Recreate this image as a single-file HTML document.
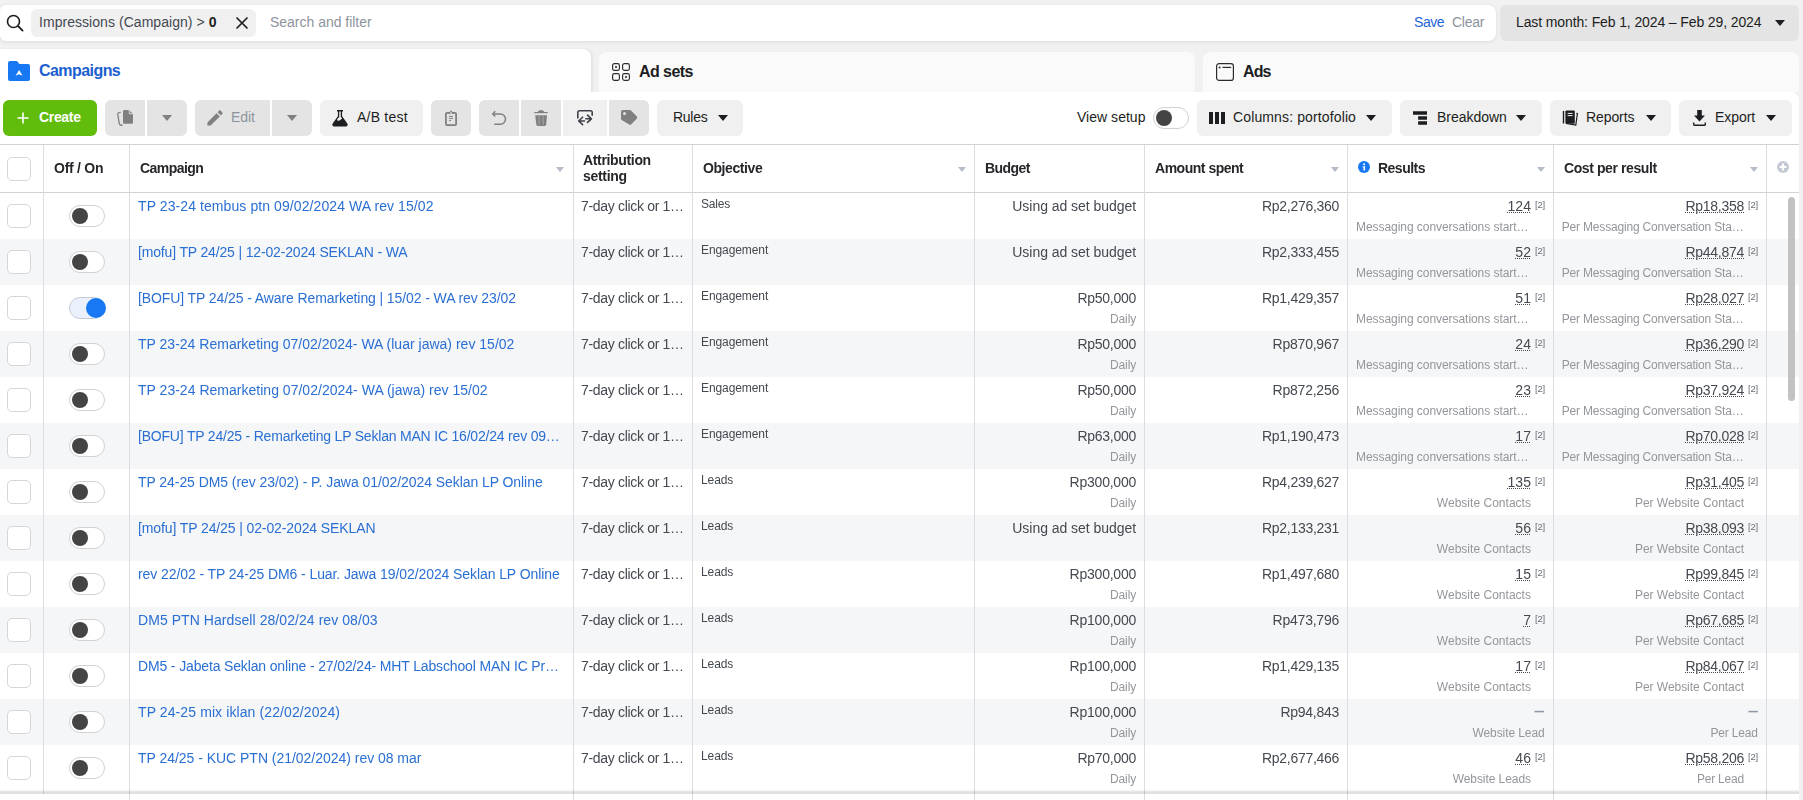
<!DOCTYPE html>
<html lang="en"><head><meta charset="utf-8"><title>Ads Manager</title>
<style>
*{box-sizing:border-box;margin:0;padding:0}
html,body{width:1803px;height:800px;overflow:hidden}
body{background:#f1f1f1;font-family:"Liberation Sans",sans-serif;font-size:14px;color:#1c1e21;position:relative}
.abs{position:absolute}
#search{position:absolute;left:0;top:5px;width:1496px;height:36px;background:#fff;border-radius:6px 8px 8px 6px;box-shadow:0 1px 4px rgba(0,0,0,.09)}
#chip{position:absolute;left:31px;top:4px;width:225px;height:28px;background:#f0f0f0;border-radius:6px}
.tx{position:absolute;white-space:nowrap;line-height:16px;transform-origin:0 50%}
#date{position:absolute;left:1500px;top:5px;width:299px;height:36px;background:#e4e4e4;border-radius:6px}
.tab{position:absolute;top:52px;height:40px;background:#fafafa;border-radius:8px 8px 0 0}
#tab1{left:0;top:49px;width:591px;height:44px;background:#fff;border-radius:0 8px 0 0;box-shadow:2px 0 3px rgba(0,0,0,.06)}
#panel{position:absolute;left:0;top:92px;width:1799px;height:708px;background:#fff;border-radius:0 8px 0 0}
.btn{position:absolute;top:100px;height:36px;background:#f0f0f0;border-radius:6px}
.btn.dis{background:#e4e4e4}
.caret{position:absolute;width:0;height:0;border-left:5.5px solid transparent;border-right:5.5px solid transparent;border-top:6px solid #1c1e21}
.caret.g{border-top-color:#808080}
.hl{position:absolute;left:0;width:1799px;height:1px;background:#d3d3d3}
.vl{position:absolute;top:145px;width:1px;height:649px;background:#dcdde0}
.hd{will-change:transform;position:absolute;font-weight:bold;font-size:14px;line-height:16px;color:#25272b;white-space:nowrap;transform-origin:0 50%}
.sort{position:absolute;top:166.8px;width:0;height:0;border-left:4.5px solid transparent;border-right:4.5px solid transparent;border-top:5.5px solid #b5bcc7}
.row{position:absolute;left:0;width:1799px;height:46px;will-change:transform}
.row.alt{background:#f5f6f7}
.cb{position:absolute;left:7px;top:11px;width:24px;height:24px;border:1px solid #d4d6da;border-radius:5px;background:#fff}
.tg{position:absolute;left:69px;top:12px;width:36px;height:22px;border:1px solid #cfd1d5;border-radius:11px;background:#fff}
.tg i{position:absolute;left:2px;top:2px;width:16px;height:16px;border-radius:50%;background:#444}
.tg.on{background:#eaf1fc;border-color:#c3cbd9}
.tg.on i{left:16px;top:0px;width:20px;height:20px;background:#1877f2}
.t{position:absolute;white-space:nowrap;line-height:16px;font-size:14px;color:#444950}
.t.r{text-align:right}
.t u{text-decoration:underline dotted;text-underline-offset:1px;text-decoration-thickness:1px}
.name{left:138px;top:5px;color:#2a6fd3}
.attr{left:581px;top:5px}
.obj{left:701px;top:2.5px;font-size:12px}
.bud{right:663px;top:5px}
.budl{right:663px}
.s{font-size:12px;color:#93969b;top:26.5px;line-height:14px}
.spent{right:460px;top:5px}
.res{right:268px;top:5px}
.cost{right:55px;top:5px}
.fn{font-size:9.5px;top:5.700px;line-height:12px;color:#6a6f78}
.fn1{left:1535px}
.fn2{left:1748px}
.resl{right:268px}
.costl{right:55px}
.resl.el{right:270.500px}
.costl.el{right:55.500px}
.resl.nd{right:254.400px}
.costl.nd{right:41.400px}
.dash{font-weight:bold;color:#8d96a6;transform:scaleX(.67);transform-origin:100% 50%;top:4px}
.res.dash{right:254.700px}
.cost.dash{right:41.500px}
svg{position:absolute;overflow:visible}
</style></head>
<body>
<div id="search">
  <svg style="left:6px;top:9px" width="18" height="18" viewBox="0 0 18 18"><circle cx="7.5" cy="7.5" r="6" fill="none" stroke="#1c1e21" stroke-width="1.6"/><path d="M12 12l4.6 4.6" stroke="#1c1e21" stroke-width="1.8" stroke-linecap="round"/></svg>
  <div id="chip"></div>
  <span class="tx" id="t_imp"  style="letter-spacing:0.048px;left:39px;top:9px;color:#444950">Impressions (Campaign) &gt; <b style="color:#1c1e21">0</b></span>
  <svg style="left:236px;top:12px" width="12" height="12" viewBox="0 0 12 12"><path d="M1 1l10 10M11 1L1 11" stroke="#1c1e21" stroke-width="1.7" stroke-linecap="round"/></svg>
  <span class="tx" id="t_sf"  style="letter-spacing:-0.017px;left:270px;top:9px;color:#8d949e">Search and filter</span>
  <span class="tx" id="t_save"  style="letter-spacing:-0.451px;left:1414px;top:9px;color:#1d65d8">Save</span>
  <span class="tx" id="t_clear"  style="letter-spacing:-0.238px;left:1452px;top:9px;color:#8d949e">Clear</span>
</div>
<div id="date">
  <span class="tx" id="t_date"  style="letter-spacing:-0.116px;left:16px;top:9px;color:#1c1e21">Last month: Feb 1, 2024 – Feb 29, 2024</span>
  <span class="caret" style="left:275px;top:15px"></span>
</div>
<div class="tab" id="tab1"></div>
<div class="tab" style="left:599px;width:596px"></div>
<div class="tab" style="left:1203px;width:596px"></div>
<div id="panel"></div>
<!-- tab contents -->
<svg style="left:8px;top:61px" width="22" height="20" viewBox="0 0 22 20"><path d="M0 2a2 2 0 0 1 2-2h6.2a2 2 0 0 1 1.5.7L11.3 3H20a2 2 0 0 1 2 2v13a2 2 0 0 1-2 2H2a2 2 0 0 1-2-2z" fill="#1877f2"/><path d="M11.100 9l3.500 5.800-3.500-1.600-3.500 1.600z" fill="#fff"/></svg>
<span class="tx" id="t_camp"  style="letter-spacing:-0.561px;left:39px;top:62px;font-size:16px;font-weight:bold;color:#1c5fd0;line-height:18px">Campaigns</span>
<svg style="left:612px;top:63px" width="18" height="18" viewBox="0 0 18 18" fill="none" stroke="#2b2d30" stroke-width="1.150"><rect x=".6" y=".6" width="6.800" height="6.800" rx="1.800"/><rect x="10.600" y=".6" width="6.800" height="6.800" rx="1.800"/><rect x=".6" y="10.600" width="6.800" height="6.800" rx="1.800"/><rect x="10.600" y="10.600" width="6.800" height="6.800" rx="1.800"/><circle cx="4" cy="4" r="1.100" fill="#2b2d30" stroke="none"/><circle cx="14" cy="14" r="1.100" fill="#2b2d30" stroke="none"/></svg>
<span class="tx" id="t_adsets"  style="letter-spacing:-0.557px;left:639px;top:63px;font-size:16px;font-weight:bold;color:#1c1e21;line-height:18px">Ad sets</span>
<svg style="left:1216px;top:63px" width="18" height="18" viewBox="0 0 18 18" fill="none" stroke="#2b2d30" stroke-width="1.200"><rect x=".6" y=".6" width="16.800" height="16.800" rx="2.500"/><path d="M6.500 4.400h8.700" stroke-width="1.200"/><circle cx="3.600" cy="4.400" r="1" fill="#2b2d30" stroke="none"/></svg>
<span class="tx" id="t_ads"  style="letter-spacing:-0.878px;left:1243px;top:63px;font-size:16px;font-weight:bold;color:#1c1e21;line-height:18px">Ads</span>

<!-- toolbar -->
<div class="btn" style="left:3px;width:94px;background:#62bc0b"></div>
<svg style="left:17px;top:112px" width="12" height="12" viewBox="0 0 12 12"><path d="M6 .5v11M.5 6h11" stroke="#fff" stroke-width="1.6"/></svg>
<span class="tx" id="t_create"  style="letter-spacing:-0.332px;left:39px;top:109px;font-weight:bold;color:#fff">Create</span>

<div class="btn dis" style="left:105px;width:40px;border-radius:6px 0 0 6px"></div>
<div class="btn dis" style="left:147px;width:40px;border-radius:0 6px 6px 0"></div>
<svg style="left:117px;top:110px" width="17" height="16" viewBox="0 0 17 16"><path d="M7.2 0h5l3.800 3.900v8.700a1.200 1.200 0 0 1-1.200 1.200H7.200A1.200 1.200 0 0 1 6 12.600V1.200A1.200 1.200 0 0 1 7.200 0z" fill="#808080"/><path d="M12.300 0v3.800h3.700" fill="none" stroke="#e4e4e4" stroke-width=".9"/><path d="M3.800 2.300C1.900 2.300.5 2.900.8 4.700l1.500 8.900c.2 1.400 1.300 1.800 3.300 1.600" fill="none" stroke="#808080" stroke-width="1.300"/></svg>
<span class="caret g" style="left:162px;top:115px"></span>

<div class="btn dis" style="left:195px;width:75px;border-radius:6px 0 0 6px"></div>
<div class="btn dis" style="left:272px;width:40px;border-radius:0 6px 6px 0"></div>
<svg style="left:207px;top:110px" width="16" height="16" viewBox="0 0 16 16"><path d="M.4 12.4L9.6 3.2l3.2 3.2-9.2 9.2H.9a.5.5 0 0 1-.5-.5zM10.6 2.2l1.6-1.6a1 1 0 0 1 1.4 0l1.8 1.8a1 1 0 0 1 0 1.4l-1.6 1.6z" fill="#808080"/></svg>
<span class="tx" id="t_edit"  style="letter-spacing:-0.075px;left:231px;top:109px;color:#8d949e">Edit</span>
<span class="caret g" style="left:287px;top:115px"></span>

<div class="btn" style="left:320px;width:103px"></div>
<svg style="left:332px;top:110px" width="16" height="16" viewBox="0 0 16 16"><path d="M5 .75h6" stroke="#1c1e21" stroke-width="1.500" fill="none"/><path d="M6.600 1v5.500L1.200 13.800a1.300 1.300 0 0 0 1.100 2.100h11.400a1.300 1.300 0 0 0 1.100-2.100L9.400 6.500V1" fill="none" stroke="#1c1e21" stroke-width="1.300"/><path d="M4.500 9.600c1 1.200 2 1.400 3 .9l3.100-2.200 4.200 5.700a1.200 1.200 0 0 1-1 1.900H2.200a1.200 1.200 0 0 1-1-1.900z" fill="#1c1e21"/></svg>
<span class="tx" id="t_ab"  style="letter-spacing:0.229px;left:357px;top:109px;color:#1c1e21">A/B test</span>

<div class="btn dis" style="left:431px;width:40px"></div>
<svg style="left:445px;top:110px" width="12" height="16" viewBox="0 0 12 16"><rect x=".9" y="2.900" width="10.200" height="12.200" rx="1.200" fill="none" stroke="#808080" stroke-width="1.800"/><path d="M3 3.800L6 .2l3 3.600z" fill="#808080"/><path d="M4.600 3.400L6 1.800l1.400 1.600z" fill="#e4e4e4"/><path d="M4 6.400h4M4 8.400h4M4 10.500h2" stroke="#808080" stroke-width="1" fill="none"/></svg>

<div class="btn dis" style="left:479px;width:40px;border-radius:6px 0 0 6px"></div>
<div class="btn dis" style="left:521px;width:40px;border-radius:0"></div>
<div class="btn" style="left:563px;width:44px;border-radius:0"></div>
<div class="btn dis" style="left:609px;width:40px;border-radius:0 6px 6px 0"></div>
<svg style="left:492px;top:110px" width="14" height="16" viewBox="0 0 14 16" fill="none" stroke="#808080" stroke-width="1.500" stroke-linejoin="round"><path d="M3.200 1.200L.7 4l2.500 2.500"/><path d="M.9 4h7.500a5.100 5.100 0 0 1 0 10.200H2.200"/></svg>
<svg style="left:534px;top:110px" width="14" height="16" viewBox="0 0 14 16"><path d="M.3 2h13.400v1.200H.3z" fill="#808080"/><path d="M4 2.100C4 .8 5 .2 7 .2s3 .6 3.200 1.900z" fill="#808080"/><path d="M1.200 5.300H13l-.8 9.200a1.500 1.500 0 0 1-1.500 1.400H3.800a1.500 1.500 0 0 1-1.500-1.400z" fill="#808080"/><path d="M5.100 6v9M9.100 6v9" stroke="#a6a6a6" stroke-width="1"/></svg>
<svg style="left:577px;top:110px" width="16" height="16" viewBox="0 0 16 16" fill="none" stroke="#3e4248" stroke-width="1.600" stroke-linecap="round" stroke-linejoin="round"><path d="M.8 8V2.300A1.500 1.500 0 0 1 2.300.8h11.400a1.500 1.500 0 0 1 1.500 1.500v3"/><path d="M5.600 7.200L1.700 11l3.900 3.600M2.200 11h5.400"/><path d="M10.500 5.200l3.900 3.600-3.900 3.600M14 8.800H8.800"/></svg>
<svg style="left:621px;top:110px" width="17" height="16" viewBox="0 0 17 16"><path d="M0 2a2 2 0 0 1 2-2h6.600a2 2 0 0 1 1.400.6l5.700 5.700a1.800 1.800 0 0 1 0 2.500l-5.400 5.400a1.800 1.800 0 0 1-2.500 0L.6 10.100A2 2 0 0 1 0 8.700z" fill="#808080"/><circle cx="3.500" cy="3.500" r="1.500" fill="#e4e4e4"/></svg>

<div class="btn" style="left:657px;width:86px"></div>
<span class="tx" id="t_rules"  style="letter-spacing:-0.285px;left:673px;top:109px;color:#1c1e21">Rules</span>
<span class="caret" style="left:718px;top:115px"></span>

<span class="tx" id="t_vs"  style="letter-spacing:0.025px;left:1077px;top:109px;color:#1c1e21">View setup</span>
<span class="tg" style="left:1153px;top:107px"><i></i></span>

<div class="btn" style="left:1197px;width:195px"></div>
<svg style="left:1209px;top:112px" width="16" height="12" viewBox="0 0 16 12"><path d="M0 0h4v12H0zM6 0h4v12H6zM12 0h4v12h-4z" fill="#1c1e21"/></svg>
<span class="tx" id="t_cols"  style="letter-spacing:0.127px;left:1233px;top:109px;color:#1c1e21">Columns: portofolio</span>
<span class="caret" style="left:1366px;top:115px"></span>

<div class="btn" style="left:1400px;width:142px"></div>
<svg style="left:1413px;top:111px" width="14" height="14" viewBox="0 0 14 14"><path d="M0 .3h14v3.400H0zM5.100 5.300H14v3.400H5.100zM5.100 10.300H14v3.400H5.100z" fill="#1c1e21"/></svg>
<span class="tx" id="t_bd"  style="letter-spacing:-0.038px;left:1437px;top:109px;color:#1c1e21">Breakdown</span>
<span class="caret" style="left:1516px;top:115px"></span>

<div class="btn" style="left:1550px;width:121px"></div>
<svg style="left:1562px;top:110px" width="16" height="16" viewBox="0 0 16 16"><path d="M1.500 1v12.500" stroke="#1c1e21" stroke-width="1.4" fill="none"/><rect x="3.400" y=".4" width="9.400" height="13.400" rx="1.200" fill="#1c1e21"/><path d="M5.600 3.400h5M5.600 5.600h5" stroke="#f0f0f0" stroke-width="1"/><path d="M14.400 3.400l1 .200-1.600 11.400-9.800-1.600" fill="none" stroke="#1c1e21" stroke-width="1.200"/></svg>
<span class="tx" id="t_rep"  style="letter-spacing:-0.089px;left:1586px;top:109px;color:#1c1e21">Reports</span>
<span class="caret" style="left:1646px;top:115px"></span>

<div class="btn" style="left:1679px;width:113px"></div>
<svg style="left:1693px;top:110px" width="13" height="16" viewBox="0 0 13 16"><path d="M4.200 0h4.600v5.600H12L6.500 11.400 1 5.600h3.200z" fill="#1c1e21"/><path d="M.7 12.600v2c0 .4.300.7.700.7h10.200c.4 0 .7-.3.700-.7v-2" fill="none" stroke="#1c1e21" stroke-width="1.400"/></svg>
<span class="tx" id="t_exp"  style="letter-spacing:-0.071px;left:1715px;top:109px;color:#1c1e21">Export</span>
<span class="caret" style="left:1766px;top:115px"></span>

<!-- table header -->
<div class="hl" style="top:144px"></div>
<div class="hl" style="top:192px"></div>
<span class="cb" style="top:157px"></span>
<span class="hd" id="h_off"  style="letter-spacing:-0.254px;left:54px;top:160px">Off / On</span>
<span class="hd" id="h_camp"  style="letter-spacing:-0.548px;left:140px;top:160px">Campaign</span>
<span class="sort" style="left:555.5px"></span>
<span class="hd" id="h_attr"  style="letter-spacing:-0.339px;left:583px;top:152px">Attribution</span><span class="hd" id="h_attr2"  style="letter-spacing:-0.313px;left:583px;top:168px">setting</span>
<span class="hd" id="h_obj"  style="letter-spacing:-0.415px;left:703px;top:160px">Objective</span>
<span class="sort" style="left:957.5px"></span>
<span class="hd" id="h_bud"  style="letter-spacing:-0.553px;left:985px;top:160px">Budget</span>
<span class="hd" id="h_amt"  style="letter-spacing:-0.484px;left:1155px;top:160px">Amount spent</span>
<span class="sort" style="left:1331px"></span>
<svg style="left:1358px;top:161px" width="12" height="12" viewBox="0 0 12 12"><circle cx="6" cy="6" r="6" fill="#1877f2"/><circle cx="6.100" cy="3.200" r="1.050" fill="#fff"/><path d="M4.600 5.200h2.500v4.400H5.500V6.300h-.9z" fill="#fff"/></svg>
<span class="hd" id="h_res"  style="letter-spacing:-0.511px;left:1378px;top:160px">Results</span>
<span class="sort" style="left:1536.5px"></span>
<span class="hd" id="h_cost"  style="letter-spacing:-0.407px;left:1564px;top:160px">Cost per result</span>
<span class="sort" style="left:1749.5px"></span>
<svg style="left:1777px;top:161px" width="12" height="12" viewBox="0 0 12 12"><circle cx="6" cy="6" r="6" fill="#c4cad4"/><path d="M6 2.600v6.800M2.600 6h6.800" stroke="#fff" stroke-width="1.900"/></svg>

<div class="row" style="top:193px">
<span class="cb"></span>
<span class="tg"><i></i></span>
<span class="t name" style="letter-spacing:0.087px">TP 23-24 tembus ptn 09/02/2024 WA rev 15/02</span>
<span class="t attr" style="letter-spacing:-0.318px">7-day click or 1…</span>
<span class="t obj" style="letter-spacing:-0.186px">Sales</span>
<span class="t r bud" style="letter-spacing:-0.044px">Using ad set budget</span>
<span class="t r spent" style="letter-spacing:-0.290px">Rp2,276,360</span>
<span class="t r res" style="letter-spacing:0.075px"><u>124</u></span>
<span class="t fn fn1" style="letter-spacing:-0.245px">[2]</span>
<span class="t r cost" style="letter-spacing:-0.274px"><u>Rp18,358</u></span>
<span class="t fn fn2" style="letter-spacing:-0.245px">[2]</span>
<span class="t r s resl el" style="letter-spacing:-0.053px">Messaging conversations start…</span>
<span class="t r s costl el" style="letter-spacing:-0.183px">Per Messaging Conversation Sta…</span>
</div>
<div class="row alt" style="top:239px">
<span class="cb"></span>
<span class="tg"><i></i></span>
<span class="t name" style="letter-spacing:-0.159px">[mofu] TP 24/25 | 12-02-2024 SEKLAN - WA</span>
<span class="t attr" style="letter-spacing:-0.318px">7-day click or 1…</span>
<span class="t obj" style="letter-spacing:-0.086px">Engagement</span>
<span class="t r bud" style="letter-spacing:-0.044px">Using ad set budget</span>
<span class="t r spent" style="letter-spacing:-0.290px">Rp2,333,455</span>
<span class="t r res" style="letter-spacing:0.072px"><u>52</u></span>
<span class="t fn fn1" style="letter-spacing:-0.245px">[2]</span>
<span class="t r cost" style="letter-spacing:-0.274px"><u>Rp44,874</u></span>
<span class="t fn fn2" style="letter-spacing:-0.245px">[2]</span>
<span class="t r s resl el" style="letter-spacing:-0.053px">Messaging conversations start…</span>
<span class="t r s costl el" style="letter-spacing:-0.183px">Per Messaging Conversation Sta…</span>
</div>
<div class="row" style="top:285px">
<span class="cb"></span>
<span class="tg on"><i></i></span>
<span class="t name" style="letter-spacing:-0.099px">[BOFU] TP 24/25 - Aware Remarketing | 15/02 - WA rev 23/02</span>
<span class="t attr" style="letter-spacing:-0.318px">7-day click or 1…</span>
<span class="t obj" style="letter-spacing:-0.086px">Engagement</span>
<span class="t r bud" style="letter-spacing:-0.274px">Rp50,000</span>
<span class="t r s budl" style="letter-spacing:-0.155px">Daily</span>
<span class="t r spent" style="letter-spacing:-0.290px">Rp1,429,357</span>
<span class="t r res" style="letter-spacing:0.072px"><u>51</u></span>
<span class="t fn fn1" style="letter-spacing:-0.245px">[2]</span>
<span class="t r cost" style="letter-spacing:-0.274px"><u>Rp28,027</u></span>
<span class="t fn fn2" style="letter-spacing:-0.245px">[2]</span>
<span class="t r s resl el" style="letter-spacing:-0.053px">Messaging conversations start…</span>
<span class="t r s costl el" style="letter-spacing:-0.183px">Per Messaging Conversation Sta…</span>
</div>
<div class="row alt" style="top:331px">
<span class="cb"></span>
<span class="tg"><i></i></span>
<span class="t name" style="letter-spacing:0.009px">TP 23-24 Remarketing 07/02/2024- WA (luar jawa) rev 15/02</span>
<span class="t attr" style="letter-spacing:-0.318px">7-day click or 1…</span>
<span class="t obj" style="letter-spacing:-0.086px">Engagement</span>
<span class="t r bud" style="letter-spacing:-0.274px">Rp50,000</span>
<span class="t r s budl" style="letter-spacing:-0.155px">Daily</span>
<span class="t r spent" style="letter-spacing:-0.236px">Rp870,967</span>
<span class="t r res" style="letter-spacing:0.072px"><u>24</u></span>
<span class="t fn fn1" style="letter-spacing:-0.245px">[2]</span>
<span class="t r cost" style="letter-spacing:-0.274px"><u>Rp36,290</u></span>
<span class="t fn fn2" style="letter-spacing:-0.245px">[2]</span>
<span class="t r s resl el" style="letter-spacing:-0.053px">Messaging conversations start…</span>
<span class="t r s costl el" style="letter-spacing:-0.183px">Per Messaging Conversation Sta…</span>
</div>
<div class="row" style="top:377px">
<span class="cb"></span>
<span class="tg"><i></i></span>
<span class="t name" style="letter-spacing:0.018px">TP 23-24 Remarketing 07/02/2024- WA (jawa) rev 15/02</span>
<span class="t attr" style="letter-spacing:-0.318px">7-day click or 1…</span>
<span class="t obj" style="letter-spacing:-0.086px">Engagement</span>
<span class="t r bud" style="letter-spacing:-0.274px">Rp50,000</span>
<span class="t r s budl" style="letter-spacing:-0.155px">Daily</span>
<span class="t r spent" style="letter-spacing:-0.236px">Rp872,256</span>
<span class="t r res" style="letter-spacing:0.072px"><u>23</u></span>
<span class="t fn fn1" style="letter-spacing:-0.245px">[2]</span>
<span class="t r cost" style="letter-spacing:-0.274px"><u>Rp37,924</u></span>
<span class="t fn fn2" style="letter-spacing:-0.245px">[2]</span>
<span class="t r s resl el" style="letter-spacing:-0.053px">Messaging conversations start…</span>
<span class="t r s costl el" style="letter-spacing:-0.183px">Per Messaging Conversation Sta…</span>
</div>
<div class="row alt" style="top:423px">
<span class="cb"></span>
<span class="tg"><i></i></span>
<span class="t name" style="letter-spacing:-0.200px">[BOFU] TP 24/25 - Remarketing LP Seklan MAN IC 16/02/24 rev 09…</span>
<span class="t attr" style="letter-spacing:-0.318px">7-day click or 1…</span>
<span class="t obj" style="letter-spacing:-0.086px">Engagement</span>
<span class="t r bud" style="letter-spacing:-0.274px">Rp63,000</span>
<span class="t r s budl" style="letter-spacing:-0.155px">Daily</span>
<span class="t r spent" style="letter-spacing:-0.290px">Rp1,190,473</span>
<span class="t r res" style="letter-spacing:0.072px"><u>17</u></span>
<span class="t fn fn1" style="letter-spacing:-0.245px">[2]</span>
<span class="t r cost" style="letter-spacing:-0.274px"><u>Rp70,028</u></span>
<span class="t fn fn2" style="letter-spacing:-0.245px">[2]</span>
<span class="t r s resl el" style="letter-spacing:-0.053px">Messaging conversations start…</span>
<span class="t r s costl el" style="letter-spacing:-0.183px">Per Messaging Conversation Sta…</span>
</div>
<div class="row" style="top:469px">
<span class="cb"></span>
<span class="tg"><i></i></span>
<span class="t name" style="letter-spacing:-0.064px">TP 24-25 DM5 (rev 23/02) - P. Jawa 01/02/2024 Seklan LP Online</span>
<span class="t attr" style="letter-spacing:-0.318px">7-day click or 1…</span>
<span class="t obj" style="letter-spacing:-0.081px">Leads</span>
<span class="t r bud" style="letter-spacing:-0.236px">Rp300,000</span>
<span class="t r s budl" style="letter-spacing:-0.155px">Daily</span>
<span class="t r spent" style="letter-spacing:-0.290px">Rp4,239,627</span>
<span class="t r res" style="letter-spacing:0.075px"><u>135</u></span>
<span class="t fn fn1" style="letter-spacing:-0.245px">[2]</span>
<span class="t r cost" style="letter-spacing:-0.274px"><u>Rp31,405</u></span>
<span class="t fn fn2" style="letter-spacing:-0.245px">[2]</span>
<span class="t r s resl" style="letter-spacing:0.023px">Website Contacts</span>
<span class="t r s costl" style="letter-spacing:-0.045px">Per Website Contact</span>
</div>
<div class="row alt" style="top:515px">
<span class="cb"></span>
<span class="tg"><i></i></span>
<span class="t name" style="letter-spacing:-0.111px">[mofu] TP 24/25 | 02-02-2024 SEKLAN</span>
<span class="t attr" style="letter-spacing:-0.318px">7-day click or 1…</span>
<span class="t obj" style="letter-spacing:-0.081px">Leads</span>
<span class="t r bud" style="letter-spacing:-0.044px">Using ad set budget</span>
<span class="t r spent" style="letter-spacing:-0.290px">Rp2,133,231</span>
<span class="t r res" style="letter-spacing:0.072px"><u>56</u></span>
<span class="t fn fn1" style="letter-spacing:-0.245px">[2]</span>
<span class="t r cost" style="letter-spacing:-0.274px"><u>Rp38,093</u></span>
<span class="t fn fn2" style="letter-spacing:-0.245px">[2]</span>
<span class="t r s resl" style="letter-spacing:0.023px">Website Contacts</span>
<span class="t r s costl" style="letter-spacing:-0.045px">Per Website Contact</span>
</div>
<div class="row" style="top:561px">
<span class="cb"></span>
<span class="tg"><i></i></span>
<span class="t name" style="letter-spacing:-0.087px">rev 22/02 - TP 24-25 DM6 - Luar. Jawa 19/02/2024 Seklan LP Online</span>
<span class="t attr" style="letter-spacing:-0.318px">7-day click or 1…</span>
<span class="t obj" style="letter-spacing:-0.081px">Leads</span>
<span class="t r bud" style="letter-spacing:-0.236px">Rp300,000</span>
<span class="t r s budl" style="letter-spacing:-0.155px">Daily</span>
<span class="t r spent" style="letter-spacing:-0.290px">Rp1,497,680</span>
<span class="t r res" style="letter-spacing:0.072px"><u>15</u></span>
<span class="t fn fn1" style="letter-spacing:-0.245px">[2]</span>
<span class="t r cost" style="letter-spacing:-0.274px"><u>Rp99,845</u></span>
<span class="t fn fn2" style="letter-spacing:-0.245px">[2]</span>
<span class="t r s resl" style="letter-spacing:0.023px">Website Contacts</span>
<span class="t r s costl" style="letter-spacing:-0.045px">Per Website Contact</span>
</div>
<div class="row alt" style="top:607px">
<span class="cb"></span>
<span class="tg"><i></i></span>
<span class="t name" style="letter-spacing:0.064px">DM5 PTN Hardsell 28/02/24 rev 08/03</span>
<span class="t attr" style="letter-spacing:-0.318px">7-day click or 1…</span>
<span class="t obj" style="letter-spacing:-0.081px">Leads</span>
<span class="t r bud" style="letter-spacing:-0.236px">Rp100,000</span>
<span class="t r s budl" style="letter-spacing:-0.155px">Daily</span>
<span class="t r spent" style="letter-spacing:-0.236px">Rp473,796</span>
<span class="t r res" style="letter-spacing:0.064px"><u>7</u></span>
<span class="t fn fn1" style="letter-spacing:-0.245px">[2]</span>
<span class="t r cost" style="letter-spacing:-0.274px"><u>Rp67,685</u></span>
<span class="t fn fn2" style="letter-spacing:-0.245px">[2]</span>
<span class="t r s resl" style="letter-spacing:0.023px">Website Contacts</span>
<span class="t r s costl" style="letter-spacing:-0.045px">Per Website Contact</span>
</div>
<div class="row" style="top:653px">
<span class="cb"></span>
<span class="tg"><i></i></span>
<span class="t name" style="letter-spacing:-0.145px">DM5 - Jabeta Seklan online - 27/02/24- MHT Labschool MAN IC Pr…</span>
<span class="t attr" style="letter-spacing:-0.318px">7-day click or 1…</span>
<span class="t obj" style="letter-spacing:-0.081px">Leads</span>
<span class="t r bud" style="letter-spacing:-0.236px">Rp100,000</span>
<span class="t r s budl" style="letter-spacing:-0.155px">Daily</span>
<span class="t r spent" style="letter-spacing:-0.290px">Rp1,429,135</span>
<span class="t r res" style="letter-spacing:0.072px"><u>17</u></span>
<span class="t fn fn1" style="letter-spacing:-0.245px">[2]</span>
<span class="t r cost" style="letter-spacing:-0.274px"><u>Rp84,067</u></span>
<span class="t fn fn2" style="letter-spacing:-0.245px">[2]</span>
<span class="t r s resl" style="letter-spacing:0.023px">Website Contacts</span>
<span class="t r s costl" style="letter-spacing:-0.045px">Per Website Contact</span>
</div>
<div class="row alt" style="top:699px">
<span class="cb"></span>
<span class="tg"><i></i></span>
<span class="t name" style="letter-spacing:0.101px">TP 24-25 mix iklan (22/02/2024)</span>
<span class="t attr" style="letter-spacing:-0.318px">7-day click or 1…</span>
<span class="t obj" style="letter-spacing:-0.081px">Leads</span>
<span class="t r bud" style="letter-spacing:-0.236px">Rp100,000</span>
<span class="t r s budl" style="letter-spacing:-0.155px">Daily</span>
<span class="t r spent" style="letter-spacing:-0.274px">Rp94,843</span>
<span class="t r res dash">—</span><span class="t r cost dash">—</span>
<span class="t r s resl nd" style="letter-spacing:-0.082px">Website Lead</span>
<span class="t r s costl nd" style="letter-spacing:-0.204px">Per Lead</span>
</div>
<div class="row" style="top:745px">
<span class="cb"></span>
<span class="tg"><i></i></span>
<span class="t name" style="letter-spacing:-0.027px">TP 24/25 - KUC PTN (21/02/2024) rev 08 mar</span>
<span class="t attr" style="letter-spacing:-0.318px">7-day click or 1…</span>
<span class="t obj" style="letter-spacing:-0.081px">Leads</span>
<span class="t r bud" style="letter-spacing:-0.274px">Rp70,000</span>
<span class="t r s budl" style="letter-spacing:-0.155px">Daily</span>
<span class="t r spent" style="letter-spacing:-0.290px">Rp2,677,466</span>
<span class="t r res" style="letter-spacing:0.072px"><u>46</u></span>
<span class="t fn fn1" style="letter-spacing:-0.245px">[2]</span>
<span class="t r cost" style="letter-spacing:-0.274px"><u>Rp58,206</u></span>
<span class="t fn fn2" style="letter-spacing:-0.245px">[2]</span>
<span class="t r s resl" style="letter-spacing:-0.061px">Website Leads</span>
<span class="t r s costl" style="letter-spacing:-0.204px">Per Lead</span>
</div>
<div class="abs" style="left:0;top:794px;width:1799px;height:6px;background:#fff"></div>
<div class="vl" style="left:43px"></div>
<div class="vl" style="left:129px;height:655px"></div>
<div class="vl" style="left:573px;height:655px"></div>
<div class="vl" style="left:692px;height:655px"></div>
<div class="vl" style="left:974px;height:655px"></div>
<div class="vl" style="left:1144px;height:655px"></div>
<div class="vl" style="left:1347px;height:655px"></div>
<div class="vl" style="left:1553px;height:655px"></div>
<div class="vl" style="left:1766px;height:655px"></div>
<div class="abs" style="left:1788px;top:197px;width:7px;height:204px;border-radius:4px;background:#c2c2c2"></div>
<div class="abs" style="left:0;top:789px;width:1799px;height:5px;background:linear-gradient(rgba(0,0,0,0),rgba(0,0,0,.035) 30%,rgba(0,0,0,.12) 58%,rgba(0,0,0,.135) 85%,rgba(0,0,0,.09))"></div>

</body></html>
